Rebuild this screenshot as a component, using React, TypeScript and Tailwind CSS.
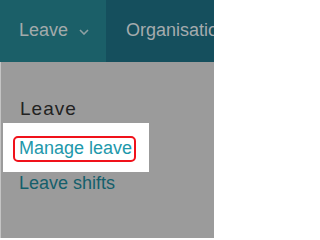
export default function App() {
  return (
    <div className="w-[214px] h-[238px] overflow-hidden bg-[#9b9b9b] font-['Liberation_Sans',Arial,sans-serif] text-[18px] leading-[18px]">
      {/* Top navigation */}
      <nav className="flex h-[62px]">
        <div className="flex w-[106px] shrink-0 items-start bg-[#1b5f68] pl-[19px] pt-[21px]">
          <span className="text-[#a3aaab]">Leave</span>
          <svg className="ml-[11px] mt-[8px]" width="10" height="6" viewBox="0 0 10 6" fill="none">
            <path d="M1 1l4 4 4-4" stroke="#8fa0a3" strokeWidth="1.6" />
          </svg>
        </div>
        <div className="flex min-w-0 flex-1 items-start overflow-hidden whitespace-nowrap bg-[#154f5d] pl-[20px] pt-[21px]">
          <span className="text-[#a5abad]">Organisation</span>
        </div>
      </nav>

      {/* Menu panel */}
      <div className="h-[176px] border-l border-[#c4c4c4] pl-[18px] pt-[38px]">
        <h2 className="pl-[1px] text-[19px] leading-[18px] tracking-[1px] text-[#222]">Leave</h2>
        <div className="mt-[5px] ml-[-16px] w-[146px] bg-white pl-[10px] pt-[13px] pb-[10px]">
          <a className="inline-block h-[26px] rounded-[5px] border-2 border-[#f0121b] pl-[4px] pr-[2px] pt-[1px] text-[#1d98ab]">
            Manage leave
          </a>
        </div>
        <a className="mt-[2px] block text-[#145f6b]">Leave shifts</a>
      </div>
    </div>
  )
}
